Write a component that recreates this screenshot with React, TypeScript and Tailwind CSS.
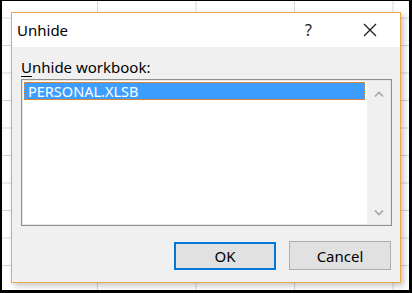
import React from "react";

export default function App() {
  return (
    <div
      className="w-[412px] h-[293px] box-border border-l-[2px] border-r-[3px] border-t-[1px] border-b-[3px] border-black bg-white bg-[linear-gradient(to_right,#d6d6d6_1px,transparent_1px),linear-gradient(to_bottom,#d6d6d6_1px,transparent_1px)] bg-[size:98.5px_27.5px] bg-[position:95px_16.5px] pl-[9px] pt-[11px]"
      style={{ fontFamily: '"Noto Sans", "Open Sans", Arial, sans-serif' }}
    >
      <div className="w-[390px] h-[271px] box-border border border-[#e9a94c] bg-[#f0f0f0] flex flex-col shadow-[3px_3px_6px_rgba(0,0,0,0.22)]">
        {/* Title bar */}
        <div className="h-[34px] bg-white flex items-center shrink-0">
          <span className="pl-[5px] text-[15px] leading-[20px] text-black">Unhide</span>
          <div className="flex-1" />
          <span className="text-[16px] leading-[20px] text-[#222] mr-[51px]">?</span>
          <svg width="14" height="14" viewBox="0 0 14 14" className="mr-[23px]">
            <path d="M1 1 L13 13 M13 1 L1 13" stroke="#1a1a1a" strokeWidth="1.2" fill="none" />
          </svg>
        </div>
        {/* Body */}
        <div className="flex-1 flex flex-col px-[8px] pl-[9px] pt-[10px] pb-[12px]">
          <div className="text-[15px] leading-[20px] text-black">
            <span className="underline underline-offset-[3px] decoration-1">U</span>nhide workbook:
          </div>
          <div className="mt-[2px] h-[147px] box-border border border-[#8f8f8f] shadow-[inset_0_0_0_1px_#e6e6e6] bg-white flex p-[1px]">
            <div className="flex-1 pt-[1px] pl-[1px] pr-[2px]">
              <div className="h-[18px] box-border border border-dotted border-[#e08a3a] bg-[#3d9eff] text-white text-[14.5px] leading-[16px] pl-[3px]">
                PERSONAL.XLSB
              </div>
            </div>
            <div className="w-[23px] bg-[#f0f0f0] flex flex-col items-center justify-between pt-[10px] pb-[8px]">
              <svg width="10" height="6" viewBox="0 0 10 6">
                <path d="M1 5.5 L5 1.5 L9 5.5" stroke="#a6a6a6" strokeWidth="1.6" fill="none" />
              </svg>
              <svg width="10" height="6" viewBox="0 0 10 6">
                <path d="M1 0.5 L5 4.5 L9 0.5" stroke="#a6a6a6" strokeWidth="1.6" fill="none" />
              </svg>
            </div>
          </div>
          <div className="flex-1" />
          <div className="flex justify-end gap-[13px] mr-[1px]">
            <button className="w-[102px] h-[28px] box-border border-2 border-[#0078d7] bg-[#e1e1e1] text-[15px] leading-[20px] text-black">
              OK
            </button>
            <button className="w-[102px] h-[29px] -mt-[1px] box-border border border-[#adadad] bg-[#e1e1e1] text-[15px] leading-[20px] text-black">
              Cancel
            </button>
          </div>
        </div>
      </div>
    </div>
  );
}
